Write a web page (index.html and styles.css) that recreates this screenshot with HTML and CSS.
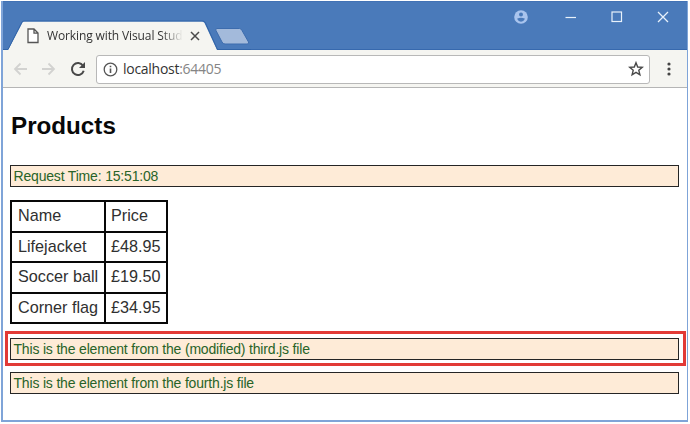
FILE: index.html
```html
<!DOCTYPE html>
<html lang="en">
<head>
<meta charset="utf-8">
<title>Working with Visual Studio</title>
<link rel="stylesheet" href="styles.css">
</head>
<body>
<div class="window">
  <header class="titlebar">
    <div class="tab">
      <svg class="tab-shape" width="248" height="32" viewBox="0 0 248 32">
        <path d="M0 32V30H5L19.500 2.500Q20 1.500 21.500 1.500H199Q200.500 1.500 201.500 3L214 30H248V32Z" fill="#f5f5f1"/>
        <path d="M0 29.500H5L19 2Q19.500 1 21 1H200Q201.500 1 202.500 3L214.500 29.500H248" fill="none" stroke="#3164a8"/>
        <path d="M214 8.500H236.500Q238 8.500 239 10.500L245.500 22Q246.500 24 244 24H222Q220 24 219 22L213 10.500Q212 8.500 214 8.500Z" fill="#a3badb" stroke="#3d6cad"/>
      </svg>
      <svg class="page-icon" width="12" height="16" viewBox="0 0 12 16"><path d="M1 1H7L11 5V14.500H1ZM7 1V5.200H11" fill="#fff" stroke="#555" stroke-width="1.300"/></svg>
      <span class="tab-title">Working with Visual Stud</span>
      <svg class="tab-close" width="10" height="10" viewBox="0 0 10 10"><path d="M1 1L9 9M9 1L1 9" stroke="#4a4a4a" stroke-width="1.500"/></svg>
    </div>
    <div class="controls">
      <svg class="profile" width="14" height="14" viewBox="0 0 14 14"><circle cx="7" cy="7" r="6.800" fill="#a9c4ee"/><circle cx="7" cy="4.500" r="2" fill="#4a7aba"/><path d="M3 8.800Q7 6.800 11 8.800Q9.500 11.800 7 11.800Q4.500 11.800 3 8.800Z" fill="#4a7aba"/></svg>
      <svg width="12" height="12" viewBox="0 0 12 12"><path d="M.5 6.500H11" stroke="#e8f1fb" stroke-width="1.200"/></svg>
      <svg width="12" height="12" viewBox="0 0 12 12"><rect x="1" y="1" width="9.500" height="9.500" fill="none" stroke="#e8f1fb" stroke-width="1.200"/></svg>
      <svg width="12" height="12" viewBox="0 0 12 12"><path d="M1 1L11 11M11 1L1 11" stroke="#e8f1fb" stroke-width="1.300"/></svg>
    </div>
  </header>
  <nav class="toolbar">
    <svg class="back" width="15" height="14" viewBox="0 0 15 14"><path d="M14 7H2M7.500 1.500L2 7L7.500 12.500" fill="none" stroke="#d2d2d0" stroke-width="1.800"/></svg>
    <svg class="forward" width="15" height="14" viewBox="0 0 15 14"><path d="M1 7H13M7.500 1.500L13 7L7.500 12.500" fill="none" stroke="#d2d2d0" stroke-width="1.800"/></svg>
    <svg class="reload" width="16" height="16" viewBox="0 0 16 16"><path d="M13 4.800A6 6 0 1 0 13.700 9.800" fill="none" stroke="#484848" stroke-width="2"/><path d="M15 1V7H9Z" fill="#484848"/></svg>
    <div class="address">
      <svg width="15" height="15" viewBox="0 0 15 15"><circle cx="7.500" cy="7.500" r="6.300" fill="none" stroke="#555" stroke-width="1.300"/><path d="M7.500 6.500V11M7.500 3.700V5.300" stroke="#555" stroke-width="1.600"/></svg>
      <span class="url">localhost<span class="port">:64405</span></span>
      <svg class="star" width="16" height="16" viewBox="0 0 16 16"><path d="M8 1.700L9.700 6L14.300 6.300L10.800 9.300L11.900 13.800L8 11.300L4.100 13.800L5.200 9.300L1.700 6.300L6.300 6Z" fill="none" stroke="#484848" stroke-width="1.400"/></svg>
    </div>
    <svg class="menu" width="4" height="14" viewBox="0 0 4 14"><circle cx="2" cy="2" r="1.600" fill="#444"/><circle cx="2" cy="7" r="1.600" fill="#444"/><circle cx="2" cy="12" r="1.600" fill="#444"/></svg>
  </nav>
  <main class="page">
    <h1>Products</h1>
    <div class="notice time">Request Time: 15:51:08</div>
    <table>
      <tr><td>Name</td><td>Price</td></tr>
      <tr><td>Lifejacket</td><td>£48.95</td></tr>
      <tr><td>Soccer ball</td><td>£19.50</td></tr>
      <tr><td>Corner flag</td><td>£34.95</td></tr>
    </table>
    <div class="highlight"><div class="notice">This is the element from the (modified) third.js file</div></div>
    <div class="notice">This is the element from the fourth.js file</div>
  </main>
</div>
</body>
</html>
```
FILE: styles.css
```css
* { box-sizing: border-box; }
body { margin: 0; background: #fff; font-family: "Liberation Sans", Arial, sans-serif; overflow: hidden; }
svg { display: block; flex: none; }
.window { width: 687px; height: 421px; margin: 1px; border: 1px solid #7fa4d8; border-width: 0 1px 2px 2px; background: #fff; }
.titlebar { height: 49px; background: #4a7aba; display: flex; justify-content: space-between; align-items: flex-start; border-top: 1px solid #4272b5; box-shadow: inset 0 -1px #3769ae; }
.tab { position: relative; width: 248px; height: 30px; margin-top: 18px; display: flex; align-items: center; padding-left: 24px; }
.tab-shape { position: absolute; left: 0; top: 0; }
.page-icon, .tab-title, .tab-close { position: relative; }
.tab-title { font: 12px/18px "Open Sans", sans-serif; color: #333; width: 136px; margin: 2px 0 0 8px; white-space: nowrap; overflow: hidden; letter-spacing: -.12px; -webkit-mask-image: linear-gradient(90deg, #000 84%, transparent 100%); mask-image: linear-gradient(90deg, #000 84%, transparent 100%); }
.tab-close { margin: 2px 0 0 7px; }
.page-icon { margin-top: 1px; }
.controls { display: flex; align-items: center; gap: 34px; height: 14px; margin: 8px 18px 0 0; }
.profile { margin-right: 3px; }
.toolbar { height: 38px; background: #f5f5f1; border-bottom: 1px solid #b5b5b5; display: flex; align-items: center; padding: 1px 16px 0 10px; }
.forward { margin-left: 13px; }
.reload { margin-left: 14px; }
.address { margin-left: 10px; width: 554px; height: 29px; border: 1px solid #b8b8b8; border-radius: 3px; background: #fff; display: flex; align-items: center; padding: 0 5px 0 6px; }
.url { font: 14px/20px "Open Sans", sans-serif; color: #333; margin-left: 5px; letter-spacing: -.28px; }
.port { color: #858585; }
.star { margin-left: auto; }
.menu { margin-left: 17px; }
.page { padding: 24px 8px 0 7px; }
h1 { margin: 0 0 0 1px; font-size: 24.2px; line-height: 28px; color: #080808; }
.notice { height: 22px; border: 1px solid #252525; background: #feebd7; color: #286328; font-size: 14px; letter-spacing: -.18px; line-height: 20px; padding-left: 2.5px; white-space: nowrap; }
.time { margin: 25px 0 13px; }
table { border-collapse: collapse; width: 158px; height: 124px; font-size: 16.2px; line-height: 18px; color: #303030; table-layout: fixed; }
td { border: 2px solid #080808; padding: 0 0 2px 6px; }
td:first-child { width: 94px; }
td:last-child { padding-left: 5px; }
.highlight { margin: 7px -7px 6px -5px; height: 35px; border: 3px solid #e23a36; padding: 4px 4px 0 2px; }
```
